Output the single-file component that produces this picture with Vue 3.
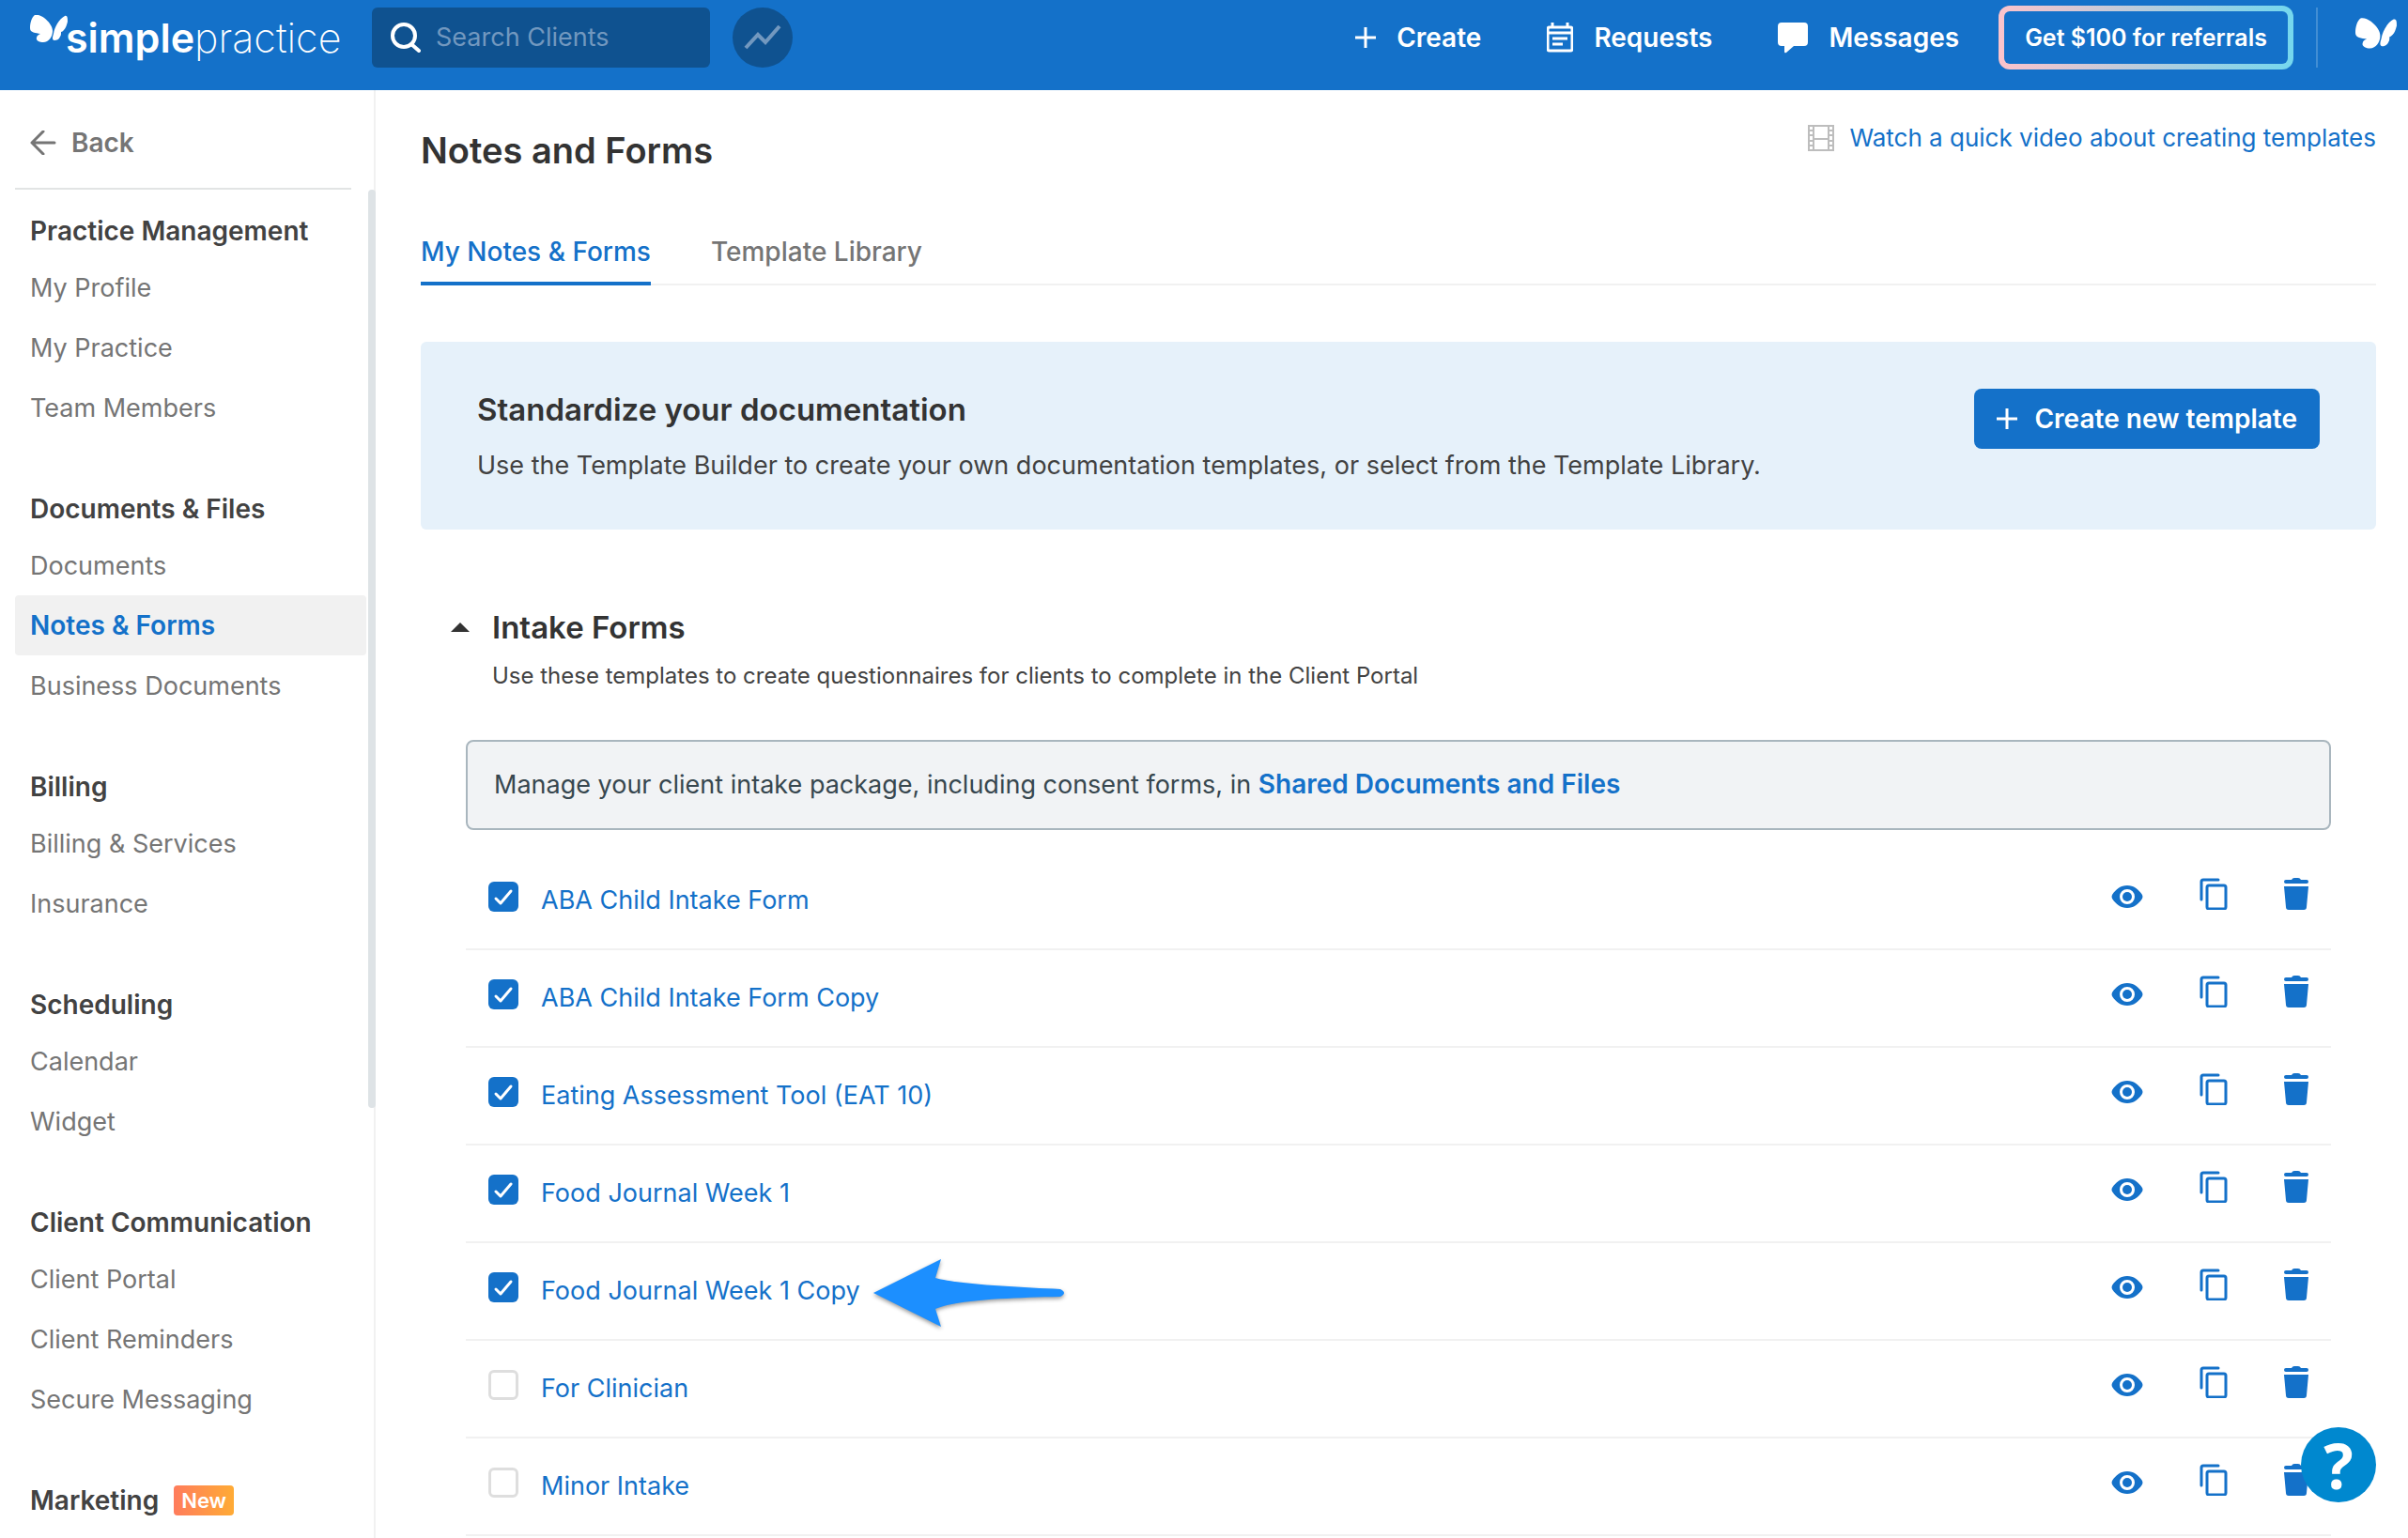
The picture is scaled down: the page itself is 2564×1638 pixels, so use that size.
<script setup>
import { ref } from 'vue'

const search = ref('')

const navGroups = [
  { title: 'Practice Management', items: ['My Profile', 'My Practice', 'Team Members'] },
  { title: 'Documents & Files', items: ['Documents', 'Notes & Forms', 'Business Documents'] },
  { title: 'Billing', items: ['Billing & Services', 'Insurance'] },
  { title: 'Scheduling', items: ['Calendar', 'Widget'] },
  { title: 'Client Communication', items: ['Client Portal', 'Client Reminders', 'Secure Messaging'] },
  { title: 'Marketing', badge: 'New', items: [] },
]
const activeItem = 'Notes & Forms'

const forms = ref([
  { id: 1, name: 'ABA Child Intake Form', shared: true },
  { id: 2, name: 'ABA Child Intake Form Copy', shared: true },
  { id: 3, name: 'Eating Assessment Tool (EAT 10)', shared: true },
  { id: 4, name: 'Food Journal Week 1', shared: true },
  { id: 5, name: 'Food Journal Week 1 Copy', shared: true, highlighted: true },
  { id: 6, name: 'For Clinician', shared: false },
  { id: 7, name: 'Minor Intake', shared: false },
])
</script>

<template>
  <div class="app">
    <header class="topbar">
      <a class="logo" href="#" aria-label="SimplePractice">
        <svg class="logo-mark" viewBox="0 0 40 30" aria-hidden="true">
          <path d="M0 14C0 8 2 2 5 0c3-1 7 1 10 3 5 4 9 9 9 14 0 6-4 12-10 12-4 0-8-2-7-5 0-2 2-3 4-4C6 19 0 19 0 14z" />
          <path d="M25 20C26 13 31 4 37 1c3-1 3 3 3 6-1 4-2 7-4 9-1 1-2 2-3 2 0 2 0 4-1 5-1 3-4 4-6 4-3 0-2-4-1-7z" />
        </svg>
        <span class="wordmark"><b>simple</b>practice</span>
      </a>
      <label class="search">
        <svg class="search-icon" viewBox="0 0 32 32" aria-hidden="true">
          <circle cx="14" cy="14" r="12" /><path d="M22 23L30 30" />
        </svg>
        <input v-model="search" type="text" placeholder="Search Clients" aria-label="Search Clients" />
      </label>
      <button class="trend" type="button" aria-label="Analytics">
        <svg viewBox="0 0 40 26" aria-hidden="true"><path d="M2 24L15 10l8 8L38 1" /></svg>
      </button>
      <nav class="top-actions">
        <a class="top-link" href="#">
          <svg class="plus" viewBox="0 0 22 22" aria-hidden="true"><path d="M11 0v22M0 11h22" /></svg>Create
        </a>
        <a class="top-link" href="#">
          <svg class="requests-icon" viewBox="0 0 28 32" aria-hidden="true">
            <rect x="1" y="5" width="26" height="25" rx="2" /><path d="M1 11h26M6 0v5M22 0v5M6 17h16M6 23h11" />
          </svg>Requests
        </a>
        <a class="top-link" href="#">
          <svg class="messages-icon" viewBox="0 0 32 33" aria-hidden="true">
            <path d="M4 0h24q4 0 4 4v17q0 4-4 4H17l-8 7q-2 1-2-1v-6H4q-4 0-4-4V4q0-4 4-4z" />
          </svg>Messages
        </a>
      </nav>
      <button class="referral" type="button">Get $100 for referrals</button>
      <a class="account" href="#" aria-label="Account">
        <svg class="account-mark" viewBox="0 0 40 30" aria-hidden="true">
          <path d="M0 14C0 8 2 2 5 0c3-1 7 1 10 3 5 4 9 9 9 14 0 6-4 12-10 12-4 0-8-2-7-5 0-2 2-3 4-4C6 19 0 19 0 14z" />
          <path d="M25 20C26 13 31 4 37 1c3-1 3 3 3 6-1 4-2 7-4 9-1 1-2 2-3 2 0 2 0 4-1 5-1 3-4 4-6 4-3 0-2-4-1-7z" />
        </svg>
      </a>
    </header>

    <div class="body">
      <aside class="sidebar">
        <a class="back" href="#">
          <svg viewBox="0 0 28 26" aria-hidden="true"><path d="M14 1L2 13l12 12M2 13h24" /></svg>Back
        </a>
        <nav class="nav" aria-label="Settings">
          <section v-for="group in navGroups" :key="group.title" class="nav-group">
            <h2>{{ group.title }}<span v-if="group.badge" class="badge">{{ group.badge }}</span></h2>
            <a v-for="item in group.items" :key="item" href="#" :class="{ active: item === activeItem }">{{ item }}</a>
          </section>
          <span class="scroll-thumb"></span>
        </nav>
      </aside>

      <main class="content">
        <div class="page-head">
          <h1>Notes and Forms</h1>
          <a class="video-link" href="#">
            <svg viewBox="0 0 28 28" aria-hidden="true">
              <path d="M1 1h26v26H1zM6 1v26M22 1v26M6 15h16M1 6h5M1 11h5M1 17h5M1 22h5M22 6h5M22 11h5M22 17h5M22 22h5" />
            </svg>Watch a quick video about creating templates
          </a>
        </div>

        <nav class="tabs">
          <a class="current" href="#">My Notes &amp; Forms</a>
          <a href="#">Template Library</a>
        </nav>

        <section class="banner">
          <div>
            <h2>Standardize your documentation</h2>
            <p>Use the Template Builder to create your own documentation templates, or select from the Template Library.</p>
          </div>
          <button type="button">
            <svg class="plus" viewBox="0 0 22 22" aria-hidden="true"><path d="M11 0v22M0 11h22" /></svg>Create new template
          </button>
        </section>

        <section class="intake">
          <div class="intake-head">
            <svg class="caret" viewBox="0 0 20 10" aria-hidden="true"><path d="M0 10L10 0l10 10z" /></svg>
            <h2>Intake Forms</h2>
          </div>
          <p class="intake-note">Use these templates to create questionnaires for clients to complete in the Client Portal</p>
          <p class="notice">Manage your client intake package, including consent forms, in <a href="#">Shared Documents and Files</a></p>

          <ul class="forms">
            <li v-for="form in forms" :key="form.id">
              <input v-model="form.shared" type="checkbox" :aria-label="form.name" />
              <a class="form-name" href="#">{{ form.name }}</a>
              <svg v-if="form.highlighted" class="pointer" viewBox="0 0 204 72" aria-hidden="true">
                <path d="M0 36L72 0l-6 20c24 7 90 10 133 12q8 4 0 8c-50 1-110 3-133 13l6 19z" />
              </svg>
              <div class="row-actions">
                <button type="button" aria-label="Preview">
                  <svg class="eye" viewBox="0 0 34 24" aria-hidden="true">
                    <path fill-rule="evenodd" d="M17 0c7 0 12 4 16 10q1 2 0 4c-4 6-9 10-16 10S5 20 1 14q-1-2 0-4C5 4 10 0 17 0zm0 4a8 8 0 1 0 0 16 8 8 0 0 0 0-16z" />
                    <circle cx="17" cy="12" r="5" />
                  </svg>
                </button>
                <button type="button" aria-label="Duplicate">
                  <svg class="copy" viewBox="0 0 30 34" aria-hidden="true">
                    <rect x="8" y="8" width="20" height="25" rx="2" /><path d="M2 23V4q0-2 2-2h16" />
                  </svg>
                </button>
                <button type="button" aria-label="Delete">
                  <svg class="trash" viewBox="0 0 26 34" aria-hidden="true">
                    <path d="M2 2h6q1-2 3-2h4q2 0 3 2h6q2 0 2 2t-2 2H2Q0 6 0 4t2-2zM0 9h26l-2 22q0 3-3 3H5q-3 0-3-3z" />
                  </svg>
                </button>
              </div>
            </li>
          </ul>
        </section>
      </main>
    </div>

    <button class="help" type="button" aria-label="Help">?</button>
  </div>
</template>

<style>
body {
  margin: 0;
  background: #fff;
  overflow: hidden;
}
</style>

<style scoped>
.app {
  display: flex;
  flex-direction: column;
  height: 100vh;
  overflow: hidden;
  color: #333;
  font-family: Inter, "Liberation Sans", sans-serif;
  font-size: 27px;
  line-height: 40px;
}
* { box-sizing: border-box; }
h1, h2, p, ul { margin: 0; padding: 0; }
a { color: #1471c9; text-decoration: none; }
button { font: inherit; border: 0; cursor: pointer; padding: 0; background: none; }
svg { flex: none; display: block; }

.topbar {
  flex: none;
  display: flex;
  align-items: center;
  height: 96px;
  padding: 0 0 16px 32px;
  background: #1471c9;
  overflow: hidden;
}
.logo { display: flex; color: #fff; width: 364px; height: 64px; }
.logo-mark { width: 40px; height: 30px; margin: 8px -2px 0 0; fill: #fff; }
.wordmark { font-weight: 200; font-size: 43px; line-height: 64px; }
.wordmark b { font-weight: 600; }
.search {
  display: flex;
  align-items: center;
  gap: 16px;
  width: 360px;
  height: 64px;
  padding: 0 20px;
  border-radius: 6px;
  background: #0f5290;
}
.search-icon { width: 32px; height: 32px; fill: none; stroke: #fff; stroke-width: 4; stroke-linecap: round; }
.search input {
  width: 100%;
  min-width: 0;
  padding: 0;
  border: 0;
  outline: 0;
  background: none;
  color: #fff;
  font: inherit;
}
.search input::placeholder { color: #7298bf; opacity: 1; }
.trend {
  display: flex;
  align-items: center;
  justify-content: center;
  width: 64px;
  height: 64px;
  margin-left: 24px;
  border-radius: 50%;
  background: #0f5290;
}
.trend svg { width: 40px; height: 26px; fill: none; stroke: #7298bf; stroke-width: 4; }
.top-actions { display: flex; gap: 70px; margin-left: auto; }
.top-link { display: flex; align-items: center; gap: 22px; color: #fff; font-size: 28px; font-weight: 600; }
.plus { width: 22px; height: 22px; stroke: #fff; stroke-width: 3; }
.requests-icon { width: 28px; height: 32px; fill: none; stroke: #fff; stroke-width: 3; }
.messages-icon { width: 32px; height: 33px; fill: #fff; }
.referral {
  height: 68px;
  margin: 0 24px 0 42px;
  padding: 0 22px;
  border: 6px solid transparent;
  border-radius: 12px;
  background: linear-gradient(#1471c9, #1471c9) padding-box, linear-gradient(90deg, #fcc3cb, #74d7ee) border-box;
  color: #fff;
  font-size: 25px;
  font-weight: 600;
}
.account { display: flex; align-items: center; height: 64px; padding: 0 12px 8px 40px; border-left: 2px solid #428ed4; }
.account-mark { width: 44px; height: 34px; fill: #fff; }

.body { flex: 1; display: flex; min-height: 0; }
.sidebar { flex: none; width: 400px; padding-left: 16px; border-right: 2px solid #f1f1f1; }
.back {
  display: flex;
  align-items: center;
  gap: 16px;
  height: 106px;
  margin-right: 24px;
  padding: 8px 0 0 16px;
  border-bottom: 2px solid #e2e4e4;
  color: #757575;
  font-size: 28px;
  font-weight: 600;
}
.back svg { width: 28px; height: 26px; fill: none; stroke: #757575; stroke-width: 3; stroke-linecap: round; stroke-linejoin: round; }
.nav { position: relative; padding: 16px 8px 0 0; }
.nav-group { display: flex; flex-direction: column; margin-bottom: 48px; }
.nav-group h2 {
  display: flex;
  align-items: center;
  height: 56px;
  padding-left: 16px;
  color: #424242;
  font-size: 28px;
  font-weight: 600;
}
.nav-group a { height: 64px; padding-left: 16px; border-radius: 4px; color: #757575; line-height: 65px; }
.nav-group a.active { background: #f1f1f1; color: #1471c9; font-size: 28px; font-weight: 600; }
.badge {
  margin-left: 16px;
  padding: 0 8px;
  border-radius: 4px;
  background: linear-gradient(90deg, #ff7c5c, #ffab35);
  color: #fff;
  font-size: 22px;
  line-height: 32px;
}
.scroll-thumb {
  position: absolute;
  top: 0;
  right: -2px;
  width: 8px;
  height: 978px;
  border-radius: 4px;
  background: #dee3e6;
}

.content { flex: 1; min-width: 0; padding: 32px 34px 0 48px; }
.page-head { display: flex; justify-content: space-between; }
h1 { font-size: 38px; line-height: 64px; font-weight: 600; }
.video-link { display: flex; align-items: center; gap: 16px; height: 38px; font-size: 26px; }
.video-link svg { width: 28px; height: 28px; fill: none; stroke: #bdbdbd; stroke-width: 2; }
.tabs { display: flex; gap: 64px; margin-top: 36px; border-bottom: 2px solid #f1f1f1; font-size: 28px; font-weight: 500; }
.tabs a { height: 76px; margin-bottom: -2px; padding-top: 20px; color: #757575; }
.tabs a.current { color: #1471c9; border-bottom: 4px solid #1471c9; }
.banner {
  display: flex;
  justify-content: space-between;
  align-items: flex-start;
  height: 200px;
  margin-top: 60px;
  padding: 50px 60px;
  border-radius: 6px;
  background: #e6f1fa;
}
.banner h2, .intake h2 { font-size: 33px; line-height: 44px; font-weight: 600; }
.banner p { margin-top: 18px; color: #424242; }
.banner button {
  display: flex;
  align-items: center;
  gap: 18px;
  height: 64px;
  padding: 0 24px;
  border-radius: 8px;
  background: #1471c9;
  color: #fff;
  font-size: 28px;
  font-weight: 600;
  white-space: nowrap;
}
.intake { margin-top: 82px; padding: 0 48px; }
.intake-head { display: flex; align-items: center; gap: 24px; margin-left: -16px; }
.caret { width: 20px; height: 10px; fill: #333; }
.intake-note { margin-top: 10px; padding-left: 28px; color: #424242; font-size: 24px; }
.notice {
  margin-top: 48px;
  padding: 26px 28px;
  border: 2px solid #a9b6be;
  border-radius: 8px;
  background: #f1f3f5;
  color: #37474f;
}
.notice a { font-size: 28px; line-height: 32px; font-weight: 600; }
.forms { margin-top: 24px; list-style: none; }
.forms li { display: flex; align-items: center; height: 104px; border-bottom: 2px solid #f1f1f1; padding: 0 24px; }
.forms input {
  appearance: none;
  flex: none;
  width: 32px;
  height: 32px;
  margin: 0 24px 8px 0;
  border: 3px solid #dedede;
  border-radius: 6px;
  background: #fff;
}
.forms input:checked {
  border: 0;
  background: #1471c9 url("data:image/svg+xml,%3Csvg xmlns='http://www.w3.org/2000/svg' viewBox='0 0 32 32'%3E%3Cpath d='M8 18l5 5L24 10' fill='none' stroke='white' stroke-width='3' stroke-linecap='round' stroke-linejoin='round'/%3E%3C/svg%3E");
}
.pointer { width: 204px; height: 72px; margin: 4px 0 0 14px; fill: #1c8fff; filter: drop-shadow(0 2px 2px #0006); }
.row-actions { display: flex; align-items: center; gap: 60px; margin-left: auto; padding-bottom: 14px; }
.row-actions button { display: flex; }
.row-actions svg { fill: #1471c9; }
.row-actions .eye { width: 34px; height: 24px; margin-top: 6px; }
.row-actions .copy { width: 30px; height: 34px; fill: none; stroke: #1471c9; stroke-width: 3; stroke-linecap: round; }
.row-actions .trash { width: 26px; height: 34px; }

.help {
  position: fixed;
  right: 34px;
  bottom: 38px;
  width: 80px;
  height: 80px;
  border-radius: 50%;
  background: #0088cf;
  color: #fff;
  font: 700 66px/80px "Open Sans", sans-serif;
}
</style>
